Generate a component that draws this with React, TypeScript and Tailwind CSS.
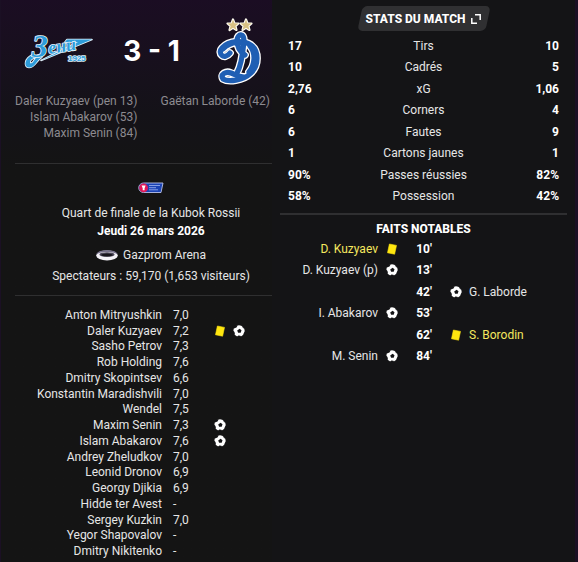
const BODY = "font-['Roboto','Liberation_Sans',sans-serif]";
const HEADING = 'text-[12px] font-extrabold leading-4 text-white';

type Mark = 'card' | 'goal';

const homeGoals = ['Daler Kuzyaev (pen 13)', 'Islam Abakarov (53)', 'Maxim Senin (84)'];
const awayGoals = ['Gaëtan Laborde (42)'];

const stats: [string, string, string][] = [
  ['17', 'Tirs', '10'],
  ['10', 'Cadrés', '5'],
  ['2,76', 'xG', '1,06'],
  ['6', 'Corners', '4'],
  ['6', 'Fautes', '9'],
  ['1', 'Cartons jaunes', '1'],
  ['90%', 'Passes réussies', '82%'],
  ['58%', 'Possession', '42%'],
];

const events: { side: 'home' | 'away'; name: string; minute: string; mark: Mark }[] = [
  { side: 'home', name: 'D. Kuzyaev', minute: "10'", mark: 'card' },
  { side: 'home', name: 'D. Kuzyaev (p)', minute: "13'", mark: 'goal' },
  { side: 'away', name: 'G. Laborde', minute: "42'", mark: 'goal' },
  { side: 'home', name: 'I. Abakarov', minute: "53'", mark: 'goal' },
  { side: 'away', name: 'S. Borodin', minute: "62'", mark: 'card' },
  { side: 'home', name: 'M. Senin', minute: "84'", mark: 'goal' },
];

const players: { name: string; rating: string; marks?: Mark[] }[] = [
  { name: 'Anton Mitryushkin', rating: '7,0' },
  { name: 'Daler Kuzyaev', rating: '7,2', marks: ['card', 'goal'] },
  { name: 'Sasho Petrov', rating: '7,3' },
  { name: 'Rob Holding', rating: '7,6' },
  { name: 'Dmitry Skopintsev', rating: '6,6' },
  { name: 'Konstantin Maradishvili', rating: '7,0' },
  { name: 'Wendel', rating: '7,5' },
  { name: 'Maxim Senin', rating: '7,3', marks: ['goal'] },
  { name: 'Islam Abakarov', rating: '7,6', marks: ['goal'] },
  { name: 'Andrey Zheludkov', rating: '7,0' },
  { name: 'Leonid Dronov', rating: '6,9' },
  { name: 'Georgy Djikia', rating: '6,9' },
  { name: 'Hidde ter Avest', rating: '-' },
  { name: 'Sergey Kuzkin', rating: '7,0' },
  { name: 'Yegor Shapovalov', rating: '-' },
  { name: 'Dmitry Nikitenko', rating: '-' },
];

function MarkIcon({ mark }: { mark: Mark }) {
  if (mark === 'card') {
    return (
      <svg viewBox="0 0 12 12" className="block size-3 shrink-0" aria-hidden="true">
        <path d="M3.400 1 10.500 2.400 8.600 11.200 1.500 9.800Z" fill="#ffe60f" stroke="#ffe60f" strokeWidth=".6" strokeLinejoin="round" />
      </svg>
    );
  }
  return (
    <svg viewBox="0 0 12 12" className="block size-3 shrink-0" aria-hidden="true">
      <circle cx="6" cy="6" r="5.7" fill="#fff" />
      <g fill="#141416">
        <path d="M6.600 3.700 8.500 5.300 7.700 7.700 5.100 7.800 4.200 5.400Z" />
        <path d="M1.200 .6 4.600 .4 3.500 2.400 .8 3.600Z" />
        <path d="M9 .6 11.800 3.800 9.900 3Z" />
        <path d="M0 5.600 1.500 7 2 9.600 0 9Z" />
        <path d="M4 12 5.300 10.600 7.400 10.700 8 12Z" />
        <path d="M12 6.400 10.800 7.900 10.400 9.800 12 9Z" />
      </g>
    </svg>
  );
}

function ZenitCrest() {
  return (
    <svg viewBox="0 0 72 36" className="h-9 w-[72px] overflow-visible" role="img" aria-label="Zenit 1925">
      <g stroke="#e4f3fb" strokeWidth="1.600" strokeLinejoin="round" fill="#2d9cda" paintOrder="stroke">
        <path d="M18 27.500 69 6.500 44 6.500 42 9 55 9Z" />
        <path d="M9 22C2 25 0 34 6 34.500C12 34.500 13 28 19 24L15 22C11 27 10 30.500 7.500 30.500C6 29 8 26 11 25Z" />
        <text x="9" y="24" fontSize="31" fontWeight="700" fontStyle="italic" fontFamily="Liberation Serif, serif">
          З
        </text>
        <text x="26" y="21" fontSize="18" fontWeight="700" fontStyle="italic" fontFamily="Liberation Serif, serif" transform="rotate(-9 26 21)">
          ени
        </text>
        <text x="45" y="28" fontSize="8" fontWeight="700" fontFamily="Liberation Sans, sans-serif">
          1925
        </text>
      </g>
    </svg>
  );
}

function DynamoCrest() {
  const swash = (
    <>
      <path d="M21 56C26 47 27 34 28 24C28 16 22 16 21 23C21 30 24 35 29 38" />
      <path d="M14 36C8 44 1 36 6 31C13 23 28 23 35 28C43 34 43 48 35 56C27 64 12 65 7 62C4 57 10 54 15 56C20 58 23 60 28 60" />
      <path d="M34 29C40 36 39 48 33 55" />
      <path d="M7 32C13 26 18 25 24 26" />
    </>
  );
  return (
    <svg viewBox="0 0 48 68" className="h-[68px] w-12 overflow-visible" role="img" aria-label="Dynamo">
      <g fill="#d8c184" stroke="#fffdf2" strokeWidth="2.200" paintOrder="stroke" strokeLinejoin="round">
        <path d="M17 2.500 18.500 6.300 22.500 6.500 19.400 9.100 20.500 13 17 10.800 13.500 13 14.600 9.100 11.500 6.500 15.500 6.300Z" />
        <path d="M30 2.500 31.500 6.300 35.500 6.500 32.400 9.100 33.500 13 30 10.800 26.500 13 27.600 9.100 24.500 6.500 28.500 6.300Z" />
      </g>
      <g fill="none" strokeLinecap="round" strokeLinejoin="round">
        <g stroke="#fff" strokeWidth="7.800">{swash}</g>
        <g stroke="#1f5fb4" strokeWidth="5.200">{swash}</g>
      </g>
    </svg>
  );
}

function CupBadge() {
  return (
    <svg viewBox="0 0 26 12" className="h-3 w-[26px]" role="img" aria-label="Kubok Rossii">
      <path d="M5.500 1H25L23 10.500H5.500A4.700 4.700 0 0 1 5.500 1Z" fill="#1b43b4" stroke="#b9c2ea" strokeWidth=".9" />
      <circle cx="5.600" cy="5.800" r="4.400" fill="#e01857" />
      <path d="M3.600 3.600H7.600L6.600 6.200V8.200H4.700V6.200Z" fill="#fff" />
      <path d="M11 3.500H22M11 5.700H18M11 7.800H20" stroke="#93a8ea" strokeWidth=".9" />
    </svg>
  );
}

function StadiumIcon() {
  return (
    <svg viewBox="0 0 22 11" className="h-[11px] w-[22px]" aria-hidden="true">
      <ellipse cx="11" cy="5.500" rx="10.800" ry="5" fill="#f4f2f8" />
      <path d="M.4 4.500C1 1 6 .2 11 .2S21 1 21.600 4.500C19 2.400 15 2 11 2S3 2.400.4 4.500Z" fill="#77718c" />
      <ellipse cx="11" cy="4.500" rx="7.600" ry="2.300" fill="#4b4658" />
      <ellipse cx="11" cy="5" rx="5.800" ry="1.500" fill="#17151c" />
    </svg>
  );
}

function Summary() {
  return (
    <section className="bg-linear-to-b from-[#1b0d23] via-[#141218] via-20% to-[#141414] to-30% pl-[14px]">
      <div className="h-[163px]">
        <div className="flex items-center justify-center pt-[17px]">
          <ZenitCrest />
          <h1 className="pr-9 pl-7 font-['Inter','Liberation_Sans',sans-serif] text-[28px] font-bold text-white">3 - 1</h1>
          <DynamoCrest />
        </div>
        <div className="flex justify-between pt-2 pr-[2px] text-[12px] leading-4 whitespace-nowrap text-[#8d8b90]">
          <ul className="text-right">
            {homeGoals.map((g) => (
              <li key={g}>{g}</li>
            ))}
          </ul>
          <ul>
            {awayGoals.map((g) => (
              <li key={g}>{g}</li>
            ))}
          </ul>
        </div>
      </div>

      <div className="flex flex-col items-center border-y border-[#2f2f30] pt-[18px] pb-[11px] pl-[15px] text-[#e6e6e6]">
        <CupBadge />
        <p className="pt-[9px] leading-5">Quart de finale de la Kubok Rossii</p>
        <p className="font-bold leading-4 text-white">Jeudi 26 mars 2026</p>
        <p className="flex items-center gap-[5px] pt-2 leading-4">
          <StadiumIcon />
          Gazprom Arena
        </p>
        <p className="pt-[5px] leading-4">Spectateurs : 59,170 (1,653 visiteurs)</p>
      </div>

      <table className="mt-[11px] h-[252px] w-full table-fixed leading-[14px] text-[#e6e6e6]">
        <tbody>
          {players.map((p) => (
            <tr key={p.name}>
              <td className="w-[147px] p-0 text-right whitespace-nowrap">{p.name}</td>
              <td className="w-[52px] py-0 pr-0 pl-[11px]">{p.rating}</td>
              <td className="p-0">
                <span className="flex items-center gap-[7px]">
                  {p.marks?.map((m) => (
                    <MarkIcon key={m} mark={m} />
                  ))}
                </span>
              </td>
            </tr>
          ))}
        </tbody>
      </table>
    </section>
  );
}

function Details() {
  return (
    <section className="bg-[#141416] px-2">
      <div className="flex justify-center pt-[6px]">
        <button type="button" className={`relative isolate flex h-[25px] items-center gap-[6px] px-2 ${HEADING}`}>
          <span className="absolute inset-x-[2px] inset-y-0 -z-10 -skew-x-12 rounded-[5px] bg-[#303032]" />
          STATS DU MATCH
          <svg viewBox="0 0 10 10" className="size-[10px]" fill="none" stroke="#fff" strokeWidth="1.500" aria-hidden="true">
            <path d="M4 .8H9.200V6M.8 4V9.200H6" />
          </svg>
        </button>
      </div>

      <table className="mt-1 h-[172px] w-full table-fixed border-separate border-spacing-0">
        <tbody>
          {stats.map(([home, label, away]) => (
            <tr key={label}>
              <td className="w-1/4 py-0 pr-0 pl-2 font-bold text-white">{home}</td>
              <th scope="row" className="p-0 text-center font-normal text-[#e6e6e6]">{label}</th>
              <td className="w-1/4 py-0 pr-2 pl-0 text-right font-bold text-white">{away}</td>
            </tr>
          ))}
        </tbody>
      </table>

      <h2 className={`mt-[6px] border-t-2 border-[#2f2f31] pt-[6px] text-center ${HEADING}`}>FAITS NOTABLES</h2>

      <table className="mt-[1px] h-[129px] w-full table-fixed">
        <tbody>
          {events.map((e) => {
            const tone = e.mark === 'card' ? 'text-[#f5e85f]' : 'text-[#e6e6e6]';
            return (
              <tr key={e.minute}>
                <td className="w-[118px] p-0">
                  {e.side === 'home' && (
                    <span className={`flex items-center justify-end gap-[8px] ${tone}`}>
                      {e.name}
                      <MarkIcon mark={e.mark} />
                    </span>
                  )}
                </td>
                <td className="w-[52px] p-0 text-center font-bold text-white">{e.minute}</td>
                <td className="p-0">
                  {e.side === 'away' && (
                    <span className={`flex items-center gap-[7px] ${tone}`}>
                      <MarkIcon mark={e.mark} />
                      {e.name}
                    </span>
                  )}
                </td>
              </tr>
            );
          })}
        </tbody>
      </table>
    </section>
  );
}

export default function App() {
  return (
    <main className={`grid min-h-screen grid-cols-[minmax(0,271fr)_minmax(0,303fr)] border-r-3 border-l border-[#1b1024] bg-[#141416] text-[12px] leading-4 ${BODY}`}>
      <Summary />
      <Details />
    </main>
  );
}
